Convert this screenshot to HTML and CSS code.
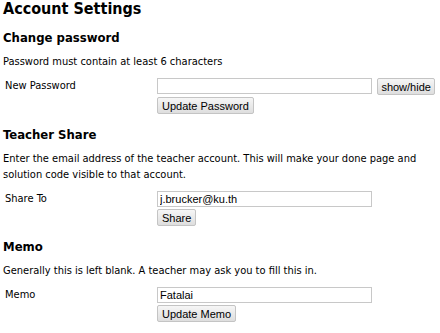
FILE: index.html
```html
<!DOCTYPE html>
<html lang="en">
<head>
    <meta charset="UTF-8">
    <title>Account Settings</title>
    <link rel="stylesheet" href="styles.css">
</head>
<body>
    <h1>Account Settings</h1>

    <!-- Change password -->
    <h2>Change password</h2>
    <p>Password must contain at least 6 characters</p>
    <table class="form-table">
        <tr>
            <td class="label">New Password</td>
            <td class="controls">
                <input type="password" class="field">
                <button type="button" class="btn toggle">show/hide</button><br>
                <button type="button" class="btn">Update Password</button>
            </td>
        </tr>
    </table>

    <!-- Teacher share -->
    <h2>Teacher Share</h2>
    <p>Enter the email address of the teacher account. This will make your done page and solution code visible to that account.</p>
    <table class="form-table">
        <tr>
            <td class="label">Share To</td>
            <td class="controls">
                <input type="text" class="field" value="j.brucker@ku.th"><br>
                <button type="button" class="btn">Share</button>
            </td>
        </tr>
    </table>

    <!-- Memo -->
    <h2>Memo</h2>
    <p>Generally this is left blank. A teacher may ask you to fill this in.</p>
    <table class="form-table">
        <tr>
            <td class="label">Memo</td>
            <td class="controls">
                <input type="text" class="field" value="Fatalai"><br>
                <button type="button" class="btn">Update Memo</button>
            </td>
        </tr>
    </table>
</body>
</html>
```

FILE: styles.css
```css
body {
    font-family: 'DejaVu Sans Condensed', 'DejaVu Sans', Verdana, sans-serif;
    font-size: 11px;
    color: #000;
    background: #fff;
    margin: 0;
    padding: 0 3px;
}

h1 {
    font-size: 16px;
    line-height: 18px;
    margin: 0 0 12px 0;
}

h2 {
    font-size: 13px;
    line-height: 16px;
    margin: 0 0 8px 0;
}

p {
    margin: 0 0 8px 0;
    line-height: 16px;
}

.form-table {
    border-collapse: collapse;
    margin: 0 0 13px 0;
}

.form-table td {
    padding: 0;
    vertical-align: top;
}

.form-table .label {
    width: 152px;
    padding: 0 0 0 2px;
    line-height: 16px;
}

.form-table .controls {
    white-space: nowrap;
    line-height: 0;
}

.field {
    box-sizing: border-box;
    font-family: 'Liberation Sans', Arial, sans-serif;
    font-size: 11px;
    width: 215px;
    height: 16px;
    padding: 0 2px;
    margin: 0;
    border: 1px solid #c8c8c8;
    vertical-align: top;
}

.btn {
    box-sizing: border-box;
    font-family: 'Liberation Sans', Arial, sans-serif;
    font-size: 11px;
    line-height: 14px;
    color: #000;
    height: 17px;
    padding: 0 4px;
    margin: 2px 0 0 0;
    border: 1px solid #c4c4c4;
    border-radius: 2px;
    background: linear-gradient(#f6f6f6, #dedede);
    vertical-align: top;
}

.btn.toggle {
    margin: 0 0 0 2px;
    width: 58px;
    padding: 0;
}
```
